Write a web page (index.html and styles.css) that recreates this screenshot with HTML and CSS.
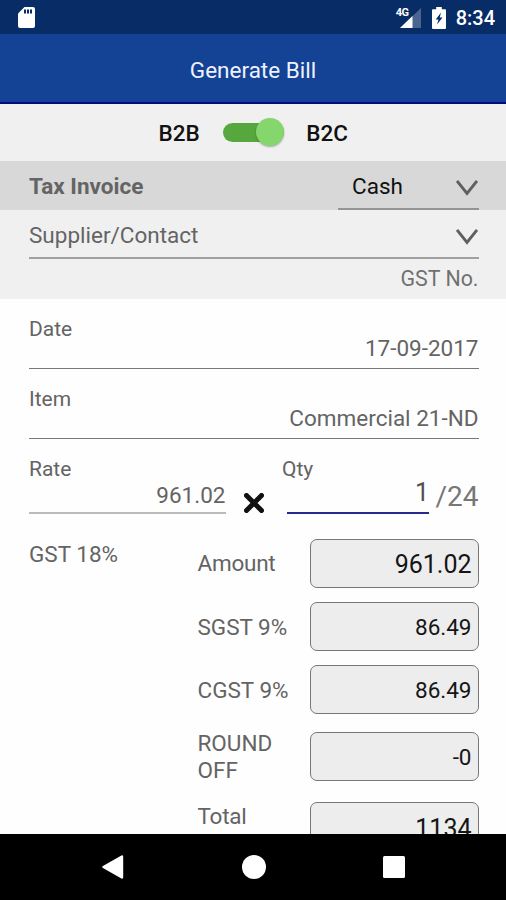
FILE: index.html
```html
<!DOCTYPE html>
<html lang="en">
<head>
<meta charset="utf-8">
<title>Generate Bill</title>
<link rel="stylesheet" href="styles.css">
</head>
<body>
<div class="phone">
  <div class="status">
    <svg class="sd" viewBox="0 0 17 21" width="17" height="21"><path d="M6.5 0H15a2 2 0 0 1 2 2v17a2 2 0 0 1-2 2H2a2 2 0 0 1-2-2V6.500z" fill="#fff"/><path d="M6 2.500h2v4H6zM9 2.500h2v4H9zM12 2.500h2v4h-2z" fill="#072c66"/></svg>
    <span class="net">4G</span>
    <svg class="signal" viewBox="0 0 21 20" width="21" height="20"><path d="M21 0v20H0z" fill="#4a6690"/><path d="M12.500 8v12H0z" fill="#fff"/></svg>
    <svg class="battery" viewBox="0 0 14 22" width="14" height="22"><path d="M4.200 0h5.600v2.200H13a1 1 0 0 1 1 1V21a1 1 0 0 1-1 1H1a1 1 0 0 1-1-1V3.200a1 1 0 0 1 1-1h3.200z" fill="#fff"/><path d="M9 5.500 3.700 12.500h2.800L5 17.500l5.500-7H7.700z" fill="#072c66"/></svg>
    <span class="clock">8:34</span>
  </div>
  <header class="header"><span class="title">Generate Bill</span></header>

  <main class="content">
    <section class="mode">
      <span class="mode-label">B2B</span>
      <span class="switch"><span class="thumb"></span></span>
      <span class="mode-label">B2C</span>
    </section>
    <section class="invoice">
      <span class="tax">Tax Invoice</span>
      <span class="pay"><span class="cash">Cash</span><svg viewBox="0 0 22 16" width="22" height="16"><path d="M1 1 11 13.500 21 1" class="chev"/></svg></span>
    </section>
    <section class="supplier">
      <div class="select"><span class="sup">Supplier/Contact</span><svg viewBox="0 0 22 16" width="22" height="16"><path d="M1 1 11 13.500 21 1" class="chev"/></svg></div>
      <div class="gstno"><span>GST No.</span></div>
    </section>
    <section class="field"><div class="label"><span>Date</span></div><div class="value"><span>17-09-2017</span></div></section>
    <section class="field"><div class="label"><span>Item</span></div><div class="value"><span>Commercial 21-ND</span></div></section>
    <section class="calc">
      <div class="rate"><div class="label"><span>Rate</span></div><div class="rate-value"><span>961.02</span></div></div>
      <svg class="times" viewBox="0 0 20 20" width="20" height="20"><path d="M2.500 2.500l15 15M17.500 2.500l-15 15"/></svg>
      <div class="qty"><div class="label"><span>Qty</span></div><div class="qty-row"><div class="qty-value">1</div><span class="stock">/24</span></div></div>
    </section>
    <section class="totals">
      <div class="gst"><span>GST 18%</span></div>
      <div class="rows">
        <div class="row"><span class="name amount">Amount</span><span class="box big">961.02</span></div>
        <div class="row"><span class="name">SGST 9%</span><span class="box">86.49</span></div>
        <div class="row"><span class="name">CGST 9%</span><span class="box">86.49</span></div>
        <div class="row"><span class="name">ROUND OFF</span><span class="box">-0</span></div>
        <div class="row total"><span class="name amount">Total</span><span class="box big">1134</span></div>
      </div>
    </section>
  </main>

  <nav class="nav">
    <svg viewBox="0 0 22 24" width="22" height="24"><path d="M20 1.500 1.500 12 20 22.500z" fill="#fff" stroke="#fff" stroke-width="2.400" stroke-linejoin="round"/></svg>
    <svg viewBox="0 0 24 24" width="24" height="24"><circle cx="12" cy="12" r="12" fill="#fff"/></svg>
    <svg viewBox="0 0 22 22" width="22" height="22"><rect width="22" height="22" rx="1.500" fill="#fff"/></svg>
  </nav>
</div>
</body>
</html>
```
FILE: styles.css
```css
* { box-sizing: border-box; }
body { margin: 0; font-family: Roboto, "Open Sans", sans-serif; font-size: 22.5px; color: #646464; background: #fefefe; }
svg { display: block; flex: none; }
span { white-space: nowrap; }
.phone { width: 506px; height: 900px; display: flex; flex-direction: column; overflow: hidden; }

.status { height: 34px; flex: none; background: #072c66; color: #fff; display: flex; align-items: flex-start; padding: 7px 11px 0 18px; }
.net { margin-left: auto; font-size: 11px; line-height: 11px; font-weight: 700; letter-spacing: -0.5px; margin-right: -9px; }
.signal { margin: 1px 11px 0 0; }
.battery { margin-right: 10px; }
.clock { font-size: 20px; line-height: 22px; font-weight: 500; }

.header { height: 70px; flex: none; background: #144294; border-bottom: 2px solid #000c80; color: #eef2ff; display: flex; justify-content: center; padding-top: 2px; line-height: 68px; }

.content { flex: 1; min-height: 0; overflow: hidden; }
.mode { height: 57px; background: #f0f0f0; display: flex; align-items: center; padding-left: 158.500px; color: #111; font-weight: 500; }
.switch { width: 61px; height: 19px; margin: 0 22.500px 1px 23px; border-radius: 10px; background: #56a83e; display: flex; align-items: center; justify-content: flex-end; }
.thumb { width: 28px; height: 28px; border-radius: 50%; background: #85d76d; box-shadow: 0 1px 2px rgba(0,0,0,.3); }

.invoice { height: 49px; background: #d8d8d8; display: flex; justify-content: space-between; padding: 0 27px 0 29px; line-height: 50px; }
.tax { font-weight: 700; }
.pay { width: 141px; border-bottom: 2px solid #949494; display: flex; justify-content: space-between; padding: 0 1px 0 14px; color: #111; }
.pay svg { margin-top: 18.500px; }
.chev { fill: none; stroke: #606060; stroke-width: 2.9; }
.supplier { height: 89px; background: #f0f0f0; padding: 0 27px 0 29px; }
.select { height: 49px; border-bottom: 2px solid #a0a0a0; display: flex; justify-content: space-between; padding-right: 1px; line-height: 51px; }
.select svg { margin-top: 18.500px; }
.gstno { text-align: right; line-height: 40px; font-size: 21.4px; color: #707070; padding-right: 0.5px; }

.label { font-size: 21px; line-height: 20px; height: 20px; }
.field { height: 70px; margin: 0 27px 0 29px; padding-top: 20px; border-bottom: 1.5px solid #777; }
.value { text-align: right; line-height: 18px; padding-right: 0.5px; }
.calc { height: 90px; margin: 0 27px 0 29px; padding-top: 20px; display: flex; }
.rate { width: 197px; }
.rate-value { height: 35px; line-height: 33px; border-bottom: 2px solid #bbb; text-align: right; padding-right: 0.5px; }
.times { margin: 34px 18px 0 18px; }
.times path { stroke: #111; stroke-width: 5; stroke-linecap: round; }
.qty { flex: 1; }
.qty-row { display: flex; justify-content: space-between; margin-left: 5px; }
.qty-value { width: 142px; height: 35px; border-bottom: 2.5px solid #252a8c; text-align: right; line-height: 28px; font-size: 25px; color: #505050; }
.stock { font-size: 28px; line-height: 36px; color: #777; padding-right: 0.5px; }

.totals { display: flex; margin: 0 27px 0 29px; padding-top: 9.500px; }
.gst { width: 168.500px; line-height: 31px; }
.rows { flex: 1; display: flex; flex-direction: column; gap: 14.300px; }
.row { display: flex; align-items: center; }
.name { width: 112.500px; line-height: 27px; padding-top: 1.500px; white-space: normal; }
.amount { letter-spacing: -0.250px; }
.box { flex: 1; height: 49px; border: 1.500px solid #777; border-radius: 7px; background: #ededed; color: #151515; text-align: right; line-height: 48px; padding-right: 6.500px; }
.big { font-size: 25px; line-height: 49px; }
.total { margin-top: 3.500px; align-items: flex-start; }
.total .box { line-height: 52px; }

.nav { height: 66.500px; flex: none; background: #000; display: flex; align-items: center; justify-content: space-between; padding: 0 101px 0 102px; }
```
